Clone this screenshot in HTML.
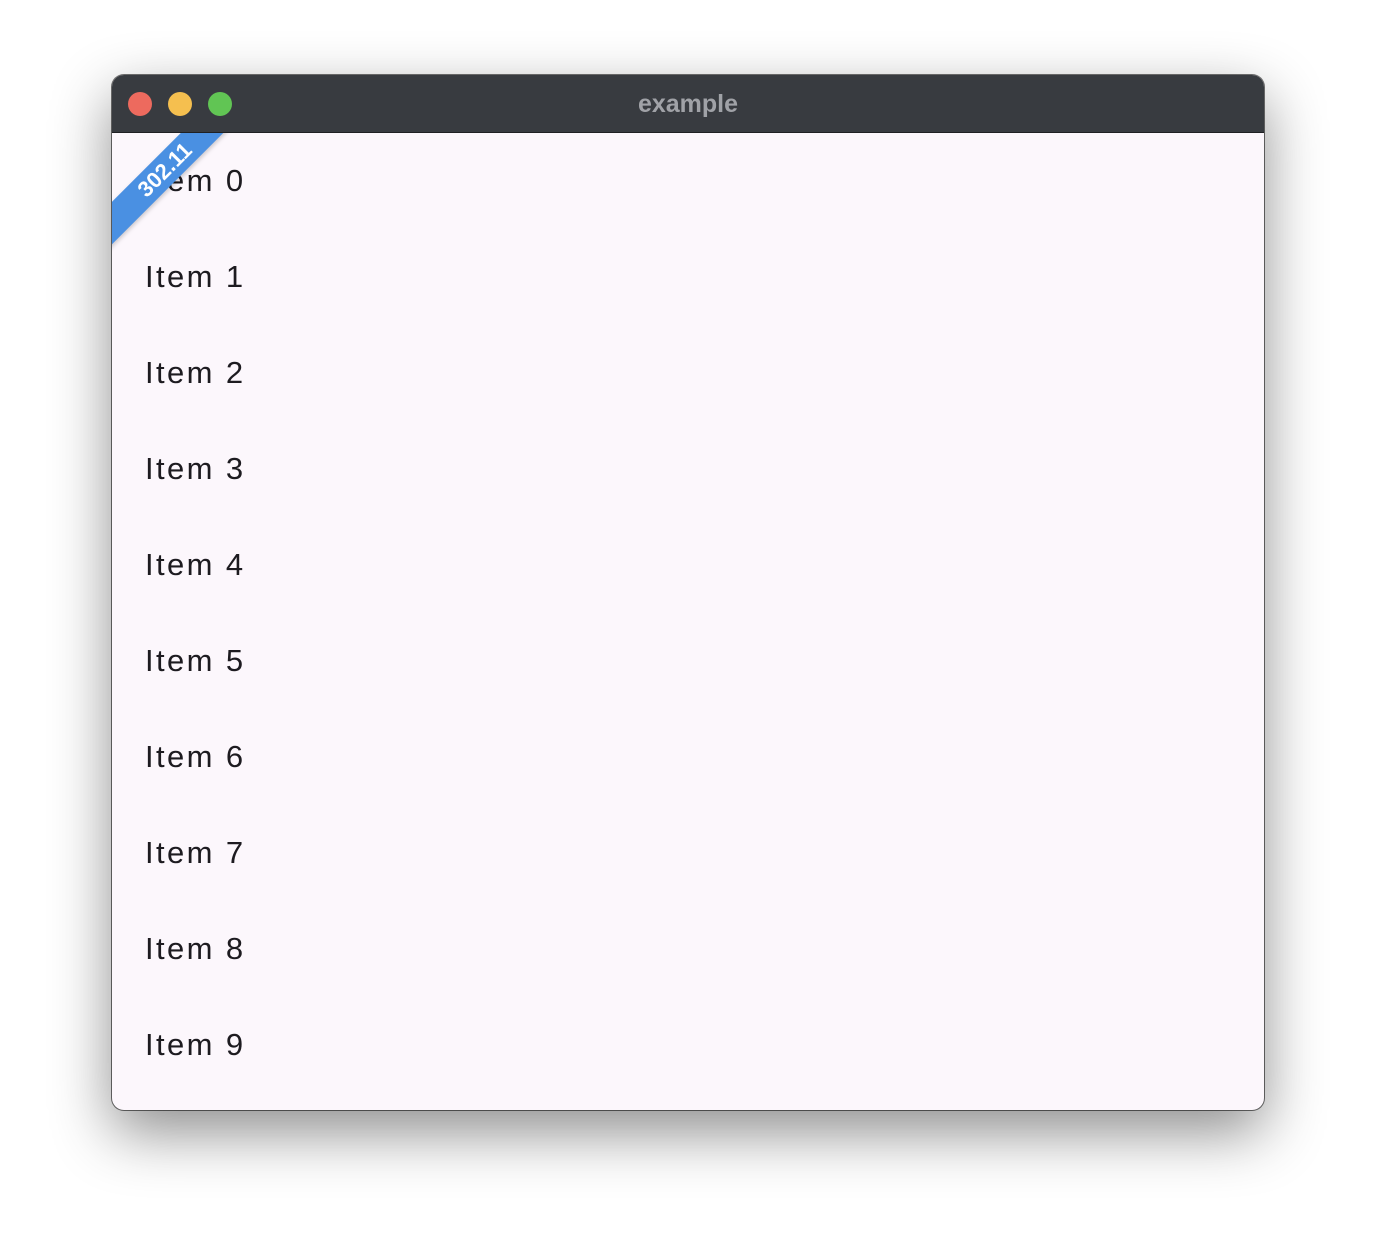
<!DOCTYPE html>
<html><head><meta charset="utf-8"><style>
html,body{margin:0;padding:0;width:1376px;height:1258px;background:#fff;overflow:hidden}
.win{position:absolute;left:112px;top:75px;width:1152px;height:1035px;border-radius:12px;overflow:hidden;background:#fcf7fc;box-shadow:0 22px 60px rgba(0,0,0,.45),0 0 0 1px rgba(0,0,0,.55)}
.tb{position:absolute;left:0;top:0;width:100%;height:57px;background:#383b40;border-bottom:1px solid #1f2023}
.dot{position:absolute;top:17px;width:24px;height:24px;border-radius:50%}
.title{position:absolute;left:0;right:0;top:15px;text-align:center;font:bold 25px "Liberation Sans",sans-serif;color:#a0a2a7}
.content{position:absolute;left:0;top:58px;right:0;bottom:0;overflow:hidden}
.item{position:absolute;left:33px;font:31px "Liberation Sans",sans-serif;letter-spacing:2.4px;color:#1d1b20}
.banner{position:absolute;left:-67px;top:22px;width:240px;height:30px;background:#4a90e2;transform:rotate(-45deg);transform-origin:center;color:#fff;font:bold 22px "Liberation Sans",sans-serif;text-align:center;line-height:30px;box-shadow:0 2px 4px rgba(0,0,0,.2)}
</style></head><body>
<div class="win">
 <div class="tb">
  <div class="dot" style="left:16px;background:#ed6a5e"></div>
  <div class="dot" style="left:56px;background:#f5bf4f"></div>
  <div class="dot" style="left:96px;background:#61c554"></div>
  <div class="title">example</div>
 </div>
 <div class="content">
  <div class="item" style="top:30px">Item 0</div>
  <div class="item" style="top:126px">Item 1</div>
  <div class="item" style="top:222px">Item 2</div>
  <div class="item" style="top:318px">Item 3</div>
  <div class="item" style="top:414px">Item 4</div>
  <div class="item" style="top:510px">Item 5</div>
  <div class="item" style="top:606px">Item 6</div>
  <div class="item" style="top:702px">Item 7</div>
  <div class="item" style="top:798px">Item 8</div>
  <div class="item" style="top:894px">Item 9</div>
  <div class="banner">302.11</div>
 </div>
</div>
</body></html>
